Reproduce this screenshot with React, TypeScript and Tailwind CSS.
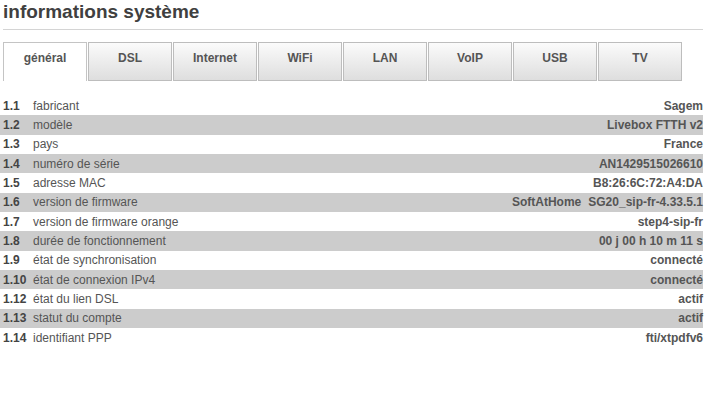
const tabs = ["général", "DSL", "Internet", "WiFi", "LAN", "VoIP", "USB", "TV"];

const rows: { n: string; label: string; value: string; extra?: string }[] = [
  { n: "1.1", label: "fabricant", value: "Sagem" },
  { n: "1.2", label: "modèle", value: "Livebox FTTH v2" },
  { n: "1.3", label: "pays", value: "France" },
  { n: "1.4", label: "numéro de série", value: "AN1429515026610" },
  { n: "1.5", label: "adresse MAC", value: "B8:26:6C:72:A4:DA" },
  { n: "1.6", label: "version de firmware", value: "SG20_sip-fr-4.33.5.1", extra: "SoftAtHome" },
  { n: "1.7", label: "version de firmware orange", value: "step4-sip-fr" },
  { n: "1.8", label: "durée de fonctionnement", value: "00 j 00 h 10 m 11 s" },
  { n: "1.9", label: "état de synchronisation", value: "connecté" },
  { n: "1.10", label: "état de connexion IPv4", value: "connecté" },
  { n: "1.12", label: "état du lien DSL", value: "actif" },
  { n: "1.13", label: "statut du compte", value: "actif" },
  { n: "1.14", label: "identifiant PPP", value: "fti/xtpdfv6" },
];

export default function App() {
  return (
    <div
      className="w-[717px] h-[397px] bg-white text-[12px] text-[#555]"
      style={{ fontFamily: '"Liberation Sans", Arial, sans-serif' }}
    >
      <div className="w-[703px]">
        <h1 className="pl-[3px] pt-[1px] text-[19px] leading-[22px] font-bold text-[#404040]">
          informations système
        </h1>
        <div className="ml-[3px] mt-[6px] h-px bg-[#d4d4d4]" />
        <div className="ml-[3px] mt-[12px] flex">
          {tabs.map((t, i) =>
            i === 0 ? (
              <div
                key={t}
                className="w-[84px] h-[39px] mr-[1px] border-t border-l border-r border-[#c4c4c4] bg-white pt-[6px] text-center font-bold text-[#555]"
              >
                {t}
              </div>
            ) : (
              <div
                key={t}
                className="w-[84px] h-[39px] mr-[1px] border border-[#bdbdbd] bg-gradient-to-b from-[#fbfbfb] to-[#dedede] pt-[6px] text-center font-bold text-[#555]"
              >
                {t}
              </div>
            )
          )}
        </div>
        <div className="mt-[15px]">
          {rows.map((r, i) => (
            <div
              key={r.n}
              className={`flex items-center h-[19.33px] pl-[3px] ${i % 2 === 1 ? "bg-[#cccccc]" : ""}`}
            >
              <span className="w-[30px] font-bold text-[#444]">{r.n}</span>
              <span className="flex-1">{r.label}</span>
              {r.extra && <span className="font-bold mr-[7px]">{r.extra}</span>}
              <span className="font-bold">{r.value}</span>
            </div>
          ))}
        </div>
      </div>
    </div>
  );
}
